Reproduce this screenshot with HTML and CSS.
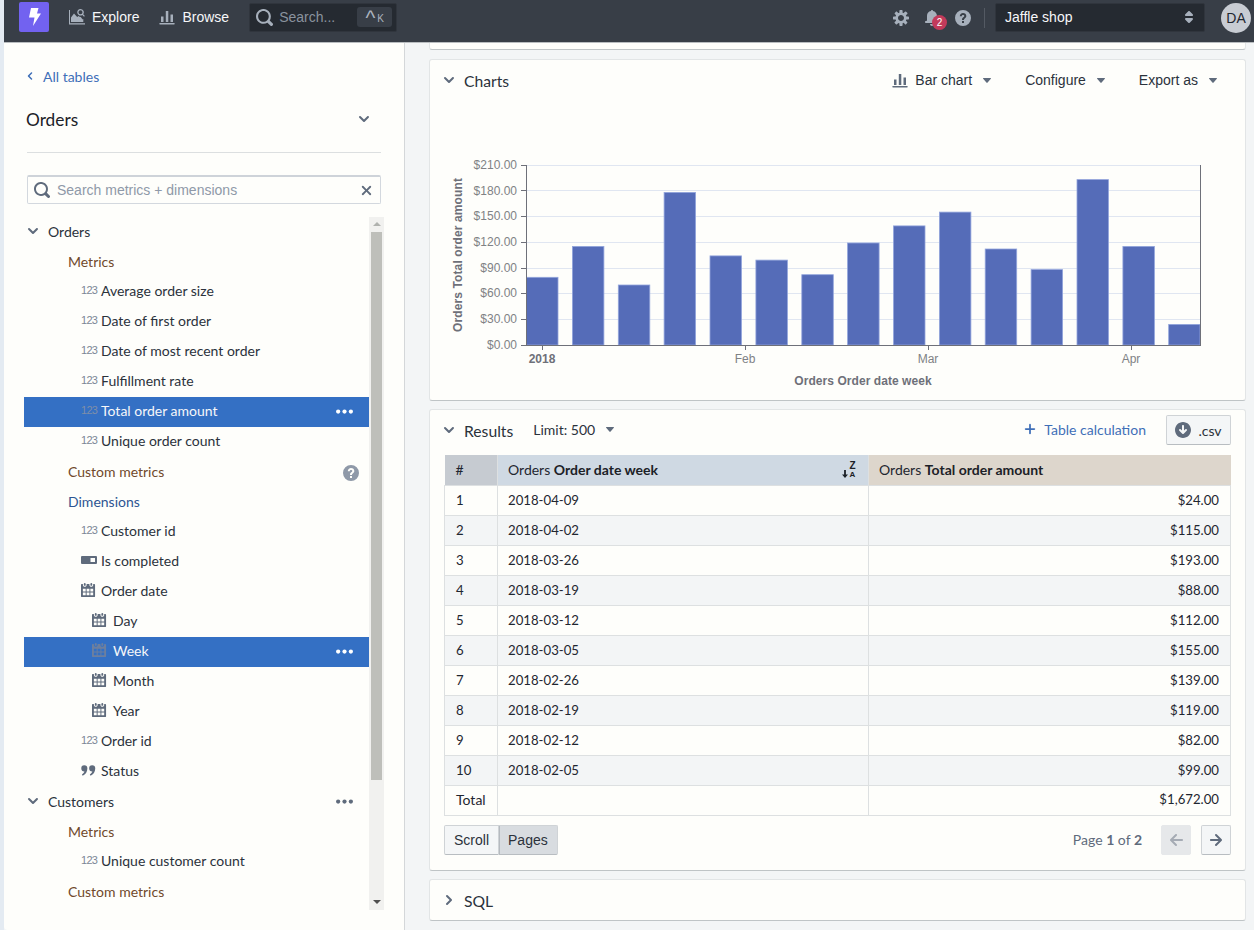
FILE: index.html
```html
<!DOCTYPE html>
<html lang="en">
<head>
<meta charset="utf-8">
<title>Explore</title>
<link rel="stylesheet" href="styles.css">
</head>
<body>
<svg class="sprite" xmlns="http://www.w3.org/2000/svg">
  <symbol id="i-chev-d" viewBox="0 0 16 16"><path d="M12 5c-.28 0-.53.11-.71.29L8 8.59l-3.29-3.3a1.003 1.003 0 00-1.42 1.42l4 4c.18.18.43.29.71.29s.53-.11.71-.29l4-4A1.003 1.003 0 0012 5z"/></symbol>
  <symbol id="i-chev-l" viewBox="0 0 16 16"><path d="M7.41 8l3.29-3.29c.19-.18.3-.43.3-.71a1.003 1.003 0 00-1.71-.71l-4 4C5.11 7.47 5 7.72 5 8c0 .28.11.53.29.71l4 4a1.003 1.003 0 001.42-1.42L7.41 8z"/></symbol>
  <symbol id="i-chev-r" viewBox="0 0 16 16"><path d="M10.71 7.29l-4-4a1.003 1.003 0 00-1.42 1.42L8.59 8 5.3 11.29c-.19.18-.3.43-.3.71a1.003 1.003 0 001.71.71l4-4c.18-.18.29-.43.29-.71 0-.28-.11-.53-.29-.71z"/></symbol>
  <symbol id="i-search" viewBox="0 0 16 16"><path d="M15.55 13.43l-2.67-2.68a6.94 6.94 0 001.11-3.76c0-3.87-3.13-7-7-7s-7 3.13-7 7 3.13 7 7 7c1.39 0 2.68-.42 3.76-1.11l2.68 2.67a1.498 1.498 0 102.12-2.12zm-8.56-1.44c-2.76 0-5-2.24-5-5s2.24-5 5-5 5 2.24 5 5-2.24 5-5 5z"/></symbol>
  <symbol id="i-cross" viewBox="0 0 16 16"><path d="M9.41 8l3.29-3.29c.19-.18.3-.43.3-.71a1.003 1.003 0 00-1.71-.71L8 6.59l-3.29-3.3a1.003 1.003 0 00-1.42 1.42L6.59 8 3.3 11.29c-.19.18-.3.43-.3.71a1.003 1.003 0 001.71.71L8 9.41l3.29 3.29c.18.19.43.3.71.3a1.003 1.003 0 00.71-1.71L9.41 8z"/></symbol>
  <symbol id="i-cog" viewBox="0 0 16 16"><path d="M15.19 6.39h-1.85c-.11-.37-.27-.71-.45-1.04l1.36-1.36c.31-.31.31-.82 0-1.13l-1.13-1.13a.803.803 0 00-1.13 0l-1.36 1.36c-.33-.17-.67-.33-1.04-.44V.79c0-.44-.36-.8-.8-.8h-1.6c-.44 0-.8.36-.8.8v1.86c-.39.12-.75.28-1.1.47l-1.3-1.3c-.3-.3-.79-.3-1.09 0L1.82 2.91c-.3.3-.3.79 0 1.09l1.3 1.3c-.2.34-.36.7-.48 1.09H.79c-.44 0-.8.36-.8.8v1.6c0 .44.36.8.8.8h1.85c.11.37.27.71.45 1.04l-1.36 1.36c-.31.31-.31.82 0 1.13l1.13 1.13c.31.31.82.31 1.13 0l1.36-1.36c.33.18.67.33 1.04.44v1.86c0 .44.36.8.8.8h1.6c.44 0 .8-.36.8-.8v-1.86c.39-.12.75-.28 1.1-.47l1.3 1.3c.3.3.79.3 1.09 0l1.09-1.09c.3-.3.3-.79 0-1.09l-1.3-1.3c.19-.35.36-.71.48-1.1h1.85c.44 0 .8-.36.8-.8v-1.6a.816.816 0 00-.81-.79zm-7.2 4.6c-1.66 0-3-1.34-3-3s1.34-3 3-3 3 1.34 3 3-1.34 3-3 3z"/></symbol>
  <symbol id="i-bell" viewBox="0 0 16 16"><path d="M8 16c1.1 0 2-.9 2-2H6c0 1.1.9 2 2 2zm6-5c-.55 0-1-.45-1-1V6c0-2.43-1.73-4.45-4.02-4.9 0-.04.02-.06.02-.1 0-.55-.45-1-1-1S7 .45 7 1c0 .04.02.06.02.1A4.992 4.992 0 003 6v4c0 .55-.45 1-1 1s-1 .45-1 1 .45 1 1 1h12c.55 0 1-.45 1-1s-.45-1-1-1z"/></symbol>
  <symbol id="i-help" viewBox="0 0 16 16"><path fill-rule="evenodd" d="M8 0a8 8 0 100 16A8 8 0 008 0zM7 11h2v2H7v-2zm1-8c1.9 0 3.3 1.2 3.3 2.9 0 1-.5 1.6-1.3 2.3-.7.6-1 .9-1 1.8H7c0-1.4.5-2 1.3-2.7.6-.5 1-.8 1-1.4C9.300 5.300 8.800 5 8 5c-.7 0-1.200.5-1.200 1.200h-2C4.800 4.300 6.200 3 8 3z"/></symbol>
  <symbol id="i-bars" viewBox="0 0 16 16"><path d="M1 14h14a.75.75 0 010 1.500H1A.75.75 0 011 14zM2 7.500h2.500V13H2zM6.800 2h2.500v11H6.800zM11.500 5.500H14V13h-2.500z"/></symbol>
  <symbol id="i-explore" viewBox="0 0 16 16"><path fill-rule="evenodd" d="M0 1h1v13.200h15V15.500H0zM2 8.500l3-4 3.200 3.400 1.300-.900c.5.600 1.300 1 2.200 1l2 2.500.6-.5V13H2zM11.500 0a3.300 3.300 0 012.700 5.200l1.700 1.700-.9.900-1.700-1.700A3.300 3.300 0 1111.500 0zm0 1.300a2 2 0 100 4 2 2 0 000-4z"/></symbol>
  <symbol id="i-cal" viewBox="0 0 16 16"><path d="M11 3c.6 0 1-.5 1-1V1c0-.6-.4-1-1-1s-1 .4-1 1v1c0 .5.4 1 1 1zm3-2h-1v1c0 1.100-.9 2-2 2s-2-.9-2-2V1H6v1c0 1.100-.9 2-2 2s-2-.9-2-2V1H1c-.6 0-1 .5-1 1v12c0 .6.400 1 1 1h13c.6 0 1-.4 1-1V2c0-.5-.5-1-1-1zM5 13H2v-3h3v3zm0-4H2V6h3v3zm4 4H6v-3h3v3zm0-4H6V6h3v3zm4 4h-3v-3h3v3zm0-4h-3V6h3v3zM4 3c.6 0 1-.5 1-1V1c0-.6-.4-1-1-1S3 .4 3 1v1c0 .5.4 1 1 1z"/></symbol>
  <symbol id="i-quote" viewBox="0 0 16 16"><path d="M3.500 2.500a3.300 3.300 0 013.300 3.300c0 3.500-2 6.500-5 7.700l-.8-1.300c1.400-.8 2.400-1.900 2.700-3.100A3.300 3.300 0 013.500 2.500zm8.400 0a3.300 3.300 0 013.300 3.300c0 3.500-2 6.500-5 7.700l-.8-1.300c1.400-.8 2.400-1.900 2.700-3.100a3.300 3.300 0 01-.2-6.600z"/></symbol>
  <symbol id="i-toggle" viewBox="0 0 16 8"><path fill-rule="evenodd" d="M1 0h14a1 1 0 011 1v6a1 1 0 01-1 1H1a1 1 0 01-1-1V1a1 1 0 011-1zm8.500 2v4H14V2z"/></symbol>
  <symbol id="i-more" viewBox="0 0 16 4"><circle cx="2" cy="2" r="2"/><circle cx="8" cy="2" r="2"/><circle cx="14" cy="2" r="2"/></symbol>
  <symbol id="i-caret" viewBox="0 0 16 16"><path d="M12 6.500c0-.28-.22-.5-.5-.5h-7a.495.495 0 00-.37.83l3.500 4c.09.1.22.17.37.17s.28-.07.37-.17l3.500-4c.08-.09.13-.2.13-.33z"/></symbol>
  <symbol id="i-updown" viewBox="0 0 16 16"><path d="M5 7h6a1.003 1.003 0 00.71-1.710l-3-3C8.530 2.110 8.280 2 8 2s-.53.110-.71.290l-3 3A1.003 1.003 0 005 7zm6 2H5a1.003 1.003 0 00-.71 1.710l3 3c.18.18.43.290.71.290s.53-.11.71-.29l3-3A1.003 1.003 0 0011 9z"/></symbol>
  <symbol id="i-plus" viewBox="0 0 16 16"><path d="M13 7H9V3c0-.55-.45-1-1-1s-1 .45-1 1v4H3c-.55 0-1 .45-1 1s.45 1 1 1h4v4c0 .55.45 1 1 1s1-.45 1-1V9h4c.55 0 1-.45 1-1s-.45-1-1-1z"/></symbol>
  <symbol id="i-dl" viewBox="0 0 16 16"><path d="M8 0C3.580 0 0 3.580 0 8s3.580 8 8 8 8-3.580 8-8-3.580-8-8-8zm3.710 8.710l-3 3c-.18.18-.43.29-.71.29s-.53-.11-.71-.29l-3-3a1.003 1.003 0 011.420-1.420L7 8.590V4c0-.55.45-1 1-1s1 .45 1 1v4.590l1.290-1.290a1.003 1.003 0 011.420 1.420z"/></symbol>
  <symbol id="i-arrow-r" viewBox="0 0 16 16"><path d="M13.700 7.290l-5-5a.965.965 0 00-.71-.3 1.003 1.003 0 00-.71 1.710l3.300 3.290H2.990c-.55 0-1 .45-1 1s.45 1 1 1h7.590l-3.290 3.290c-.19.18-.3.43-.3.71a1.003 1.003 0 001.710.71l5-5c.18-.18.29-.43.29-.71s-.12-.52-.3-.7z"/></symbol>
  <symbol id="i-arrow-l" viewBox="0 0 16 16"><path d="M13.990 6.990H5.410l3.290-3.290c.19-.18.3-.43.3-.71a1.003 1.003 0 00-1.710-.71l-5 5c-.18.18-.29.43-.29.71s.11.53.29.71l5 5a1.003 1.003 0 001.420-1.420L5.410 8.990h8.580c.55 0 1-.45 1-1s-.45-1-1-1z"/></symbol>
  <symbol id="i-sort-arrow" viewBox="0 0 6 8"><path d="M2.100 0h1.800v4.500H6L3 8 0 4.500h2.100z"/></symbol>
</svg>

<header class="navbar">
  <div class="nav-logo">
    <svg class="bolt" viewBox="0 0 16 20"><path d="M5 1h7.500L11 6.500h4L7 19l1.500-8.500H3z"/></svg>
  </div>
  <a class="nav-link nav-explore"><svg class="ic16"><use href="#i-explore"/></svg>Explore</a>
  <a class="nav-link nav-browse"><svg class="ic16"><use href="#i-bars"/></svg>Browse</a>
  <div class="nav-search">
    <svg class="ic16"><use href="#i-search"/></svg>
    <span class="nav-search-text">Search...</span>
    <span class="kbd"><span class="kbd-ctrl">^</span><span class="kbd-k">K</span></span>
  </div>
  <div class="nav-right">
    <svg class="ic16 nav-ic"><use href="#i-cog"/></svg>
    <span class="bell"><svg class="ic16 nav-ic"><use href="#i-bell"/></svg><span class="badge">2</span></span>
    <svg class="ic16 nav-ic"><use href="#i-help"/></svg>
    <span class="nav-divider"></span>
    <div class="project"><span>Jaffle shop</span><svg class="ic16"><use href="#i-updown"/></svg></div>
    <span class="avatar">DA</span>
  </div>
</header>

<div class="page">
  <aside class="sidebar">
    <a class="back"><svg class="ic12"><use href="#i-chev-l"/></svg>All tables</a>
    <div class="table-title"><span>Orders</span><svg class="ic16"><use href="#i-chev-d"/></svg></div>
    <hr class="rule">
    <div class="filter">
      <svg class="ic16"><use href="#i-search"/></svg>
      <span class="filter-text">Search metrics + dimensions</span>
      <svg class="ic16 filter-x"><use href="#i-cross"/></svg>
    </div>
    <div class="tree-wrap">
      <ul class="tree">
        <li class="row row-table"><svg class="ic16"><use href="#i-chev-d"/></svg>Orders</li>
        <li class="row row-group metric">Metrics</li>
        <li class="row row-item"><span class="num">123</span>Average order size</li>
        <li class="row row-item"><span class="num">123</span>Date of first order</li>
        <li class="row row-item"><span class="num">123</span>Date of most recent order</li>
        <li class="row row-item"><span class="num">123</span>Fulfillment rate</li>
        <li class="row row-item selected"><span class="num">123</span>Total order amount<svg class="more"><use href="#i-more"/></svg></li>
        <li class="row row-item"><span class="num">123</span>Unique order count</li>
        <li class="row row-group metric">Custom metrics<svg class="ic16 row-help"><use href="#i-help"/></svg></li>
        <li class="row row-group dimension">Dimensions</li>
        <li class="row row-item"><span class="num">123</span>Customer id</li>
        <li class="row row-item"><svg class="toggle"><use href="#i-toggle"/></svg>Is completed</li>
        <li class="row row-item"><svg class="type-ic"><use href="#i-cal"/></svg>Order date</li>
        <li class="row row-sub"><svg class="type-ic"><use href="#i-cal"/></svg>Day</li>
        <li class="row row-sub selected"><svg class="type-ic"><use href="#i-cal"/></svg>Week<svg class="more"><use href="#i-more"/></svg></li>
        <li class="row row-sub"><svg class="type-ic"><use href="#i-cal"/></svg>Month</li>
        <li class="row row-sub"><svg class="type-ic"><use href="#i-cal"/></svg>Year</li>
        <li class="row row-item"><span class="num">123</span>Order id</li>
        <li class="row row-item"><svg class="type-ic"><use href="#i-quote"/></svg>Status</li>
        <li class="row row-table"><svg class="ic16"><use href="#i-chev-d"/></svg>Customers<svg class="more"><use href="#i-more"/></svg></li>
        <li class="row row-group metric">Metrics</li>
        <li class="row row-item"><span class="num">123</span>Unique customer count</li>
        <li class="row row-group metric">Custom metrics</li>
      </ul>
      <div class="scrollbar">
        <span class="sb-arrow sb-up"></span>
        <span class="sb-thumb"></span>
        <span class="sb-arrow sb-down"></span>
      </div>
    </div>
  </aside>

  <main class="main">
    <div class="card card-stub"></div>

    <section class="card card-charts">
      <div class="card-head">
        <svg class="ic16"><use href="#i-chev-d"/></svg>
        <span class="card-title">Charts</span>
        <div class="tools">
          <a class="tool"><svg class="ic16"><use href="#i-bars"/></svg>Bar chart<svg class="ic16"><use href="#i-caret"/></svg></a>
          <a class="tool">Configure<svg class="ic16"><use href="#i-caret"/></svg></a>
          <a class="tool">Export as<svg class="ic16"><use href="#i-caret"/></svg></a>
        </div>
      </div>
      <svg class="chart" viewBox="430 101 815 299" xmlns="http://www.w3.org/2000/svg">
        <g class="grid">
          <line x1="526" x2="1200" y1="165.500" y2="165.500"/>
          <line x1="526" x2="1200" y1="190.500" y2="190.500"/>
          <line x1="526" x2="1200" y1="216.500" y2="216.500"/>
          <line x1="526" x2="1200" y1="242.500" y2="242.500"/>
          <line x1="526" x2="1200" y1="268.500" y2="268.500"/>
          <line x1="526" x2="1200" y1="293.500" y2="293.500"/>
          <line x1="526" x2="1200" y1="319.500" y2="319.500"/>
        </g>
        <g class="bars">
          <rect x="526.500" y="277.300" width="31.500" height="67.700"/>
          <rect x="572.400" y="246.400" width="31.500" height="98.600"/>
          <rect x="618.300" y="285" width="31.500" height="60"/>
          <rect x="664.100" y="192.400" width="31.500" height="152.600"/>
          <rect x="710" y="255.900" width="31.500" height="89.100"/>
          <rect x="755.900" y="260.100" width="31.500" height="84.900"/>
          <rect x="801.800" y="274.700" width="31.500" height="70.300"/>
          <rect x="847.600" y="243" width="31.500" height="102"/>
          <rect x="893.500" y="225.900" width="31.500" height="119.100"/>
          <rect x="939.400" y="212.100" width="31.500" height="132.900"/>
          <rect x="985.200" y="249" width="31.500" height="96"/>
          <rect x="1031.100" y="269.600" width="31.500" height="75.400"/>
          <rect x="1077" y="179.600" width="31.500" height="165.400"/>
          <rect x="1122.900" y="246.400" width="31.500" height="98.600"/>
          <rect x="1168.700" y="324.400" width="31.300" height="20.600"/>
        </g>
        <g class="axis">
          <path d="M526.500 165v180.500M1200.500 165v180.500M526 345.500h675M521 165.500h5M521 190.500h5M521 216.500h5M521 242.500h5M521 268.500h5M521 293.500h5M521 319.500h5M521 345.500h5M542.500 345v5M745.500 345v5M928.500 345v5M1131.500 345v5"/>
        </g>
        <g class="y-labels">
          <text x="517" y="169">$210.00</text>
          <text x="517" y="195">$180.00</text>
          <text x="517" y="220">$150.00</text>
          <text x="517" y="246">$120.00</text>
          <text x="517" y="272">$90.00</text>
          <text x="517" y="297">$60.00</text>
          <text x="517" y="323">$30.00</text>
          <text x="517" y="349">$0.00</text>
        </g>
        <g class="x-labels">
          <text class="x-year" x="542" y="363">2018</text>
          <text x="745" y="363">Feb</text>
          <text x="928" y="363">Mar</text>
          <text x="1131" y="363">Apr</text>
        </g>
        <text class="axis-name" x="863" y="385">Orders Order date week</text>
        <text class="axis-name axis-name-y" transform="translate(462 255) rotate(-90)">Orders Total order amount</text>
      </svg>
    </section>

    <section class="card card-results">
      <div class="card-head results-head">
        <svg class="ic16"><use href="#i-chev-d"/></svg>
        <span class="card-title">Results</span>
        <a class="limit">Limit: 500<svg class="ic16"><use href="#i-caret"/></svg></a>
        <div class="tools">
          <a class="add-calc"><svg class="ic14"><use href="#i-plus"/></svg>Table calculation</a>
          <a class="btn btn-csv"><svg class="ic16"><use href="#i-dl"/></svg>.csv</a>
        </div>
      </div>
      <table class="grid-table">
        <colgroup><col class="col-idx"><col class="col-date"><col class="col-amt"></colgroup>
        <thead>
          <tr>
            <th class="th-idx">#</th>
            <th class="th-dim"><span class="th-in"><span>Orders <b>Order date week</b></span><span class="sort"><svg class="sort-arrow"><use href="#i-sort-arrow"/></svg><span class="sort-az"><span>Z</span><span>A</span></span></span></span></th>
            <th class="th-metric">Orders <b>Total order amount</b></th>
          </tr>
        </thead>
        <tbody>
          <tr><td>1</td><td>2018-04-09</td><td class="amt">$24.00</td></tr>
          <tr><td>2</td><td>2018-04-02</td><td class="amt">$115.00</td></tr>
          <tr><td>3</td><td>2018-03-26</td><td class="amt">$193.00</td></tr>
          <tr><td>4</td><td>2018-03-19</td><td class="amt">$88.00</td></tr>
          <tr><td>5</td><td>2018-03-12</td><td class="amt">$112.00</td></tr>
          <tr><td>6</td><td>2018-03-05</td><td class="amt">$155.00</td></tr>
          <tr><td>7</td><td>2018-02-26</td><td class="amt">$139.00</td></tr>
          <tr><td>8</td><td>2018-02-19</td><td class="amt">$119.00</td></tr>
          <tr><td>9</td><td>2018-02-12</td><td class="amt">$82.00</td></tr>
          <tr><td>10</td><td>2018-02-05</td><td class="amt">$99.00</td></tr>
        </tbody>
        <tfoot>
          <tr><td>Total</td><td></td><td class="amt">$1,672.00</td></tr>
        </tfoot>
      </table>
      <div class="pager-row">
        <div class="btn-group"><a class="btn seg">Scroll</a><a class="btn seg seg-active">Pages</a></div>
        <div class="pager">
          <span class="page-text">Page <b>1</b> of <b>2</b></span>
          <a class="page-btn page-off"><svg class="ic16"><use href="#i-arrow-l"/></svg></a>
          <a class="page-btn"><svg class="ic16"><use href="#i-arrow-r"/></svg></a>
        </div>
      </div>
    </section>

    <section class="card card-sql">
      <div class="card-head">
        <svg class="ic16"><use href="#i-chev-r"/></svg>
        <span class="card-title">SQL</span>
      </div>
    </section>
  </main>
</div>
</body>
</html>
```

FILE: styles.css
```css
* { box-sizing: border-box; }
html, body { margin: 0; height: 100%; }
body {
  width: 1254px;
  height: 930px;
  overflow: hidden;
  background: #e4ebf2;
  padding-left: 4px;
  font-family: "Lato", sans-serif;
  font-size: 14px;
  color: #1f2630;
}
a { color: inherit; text-decoration: none; }
ul { list-style: none; margin: 0; padding: 0; }
.sprite { display: none; }
svg { fill: currentColor; flex: none; }
.ic12 { width: 12px; height: 12px; }
.ic14 { width: 14px; height: 14px; }
.ic16 { width: 16px; height: 16px; }

/* navbar */
.navbar {
  height: 43px;
  background: #383e47;
  display: flex;
  align-items: flex-start;
  color: #f6f7f9;
  font-family: "Liberation Sans", sans-serif;
  font-size: 14px;
  padding-left: 15px;
  border-bottom: 1px solid #b9bdc0;
}
.nav-logo {
  width: 30px;
  height: 30px;
  margin-top: 2px;
  background: #7262f0;
  border-radius: 2px;
  display: flex;
  align-items: center;
  justify-content: center;
  color: #fff;
}
.bolt { width: 16px; height: 20px; }
.nav-link {
  height: 34px;
  display: flex;
  align-items: center;
  gap: 7px;
}
.nav-link svg { color: #a7b0bc; }
.nav-explore { margin-left: 20px; }
.nav-browse { margin-left: 20px; }
.nav-search {
  margin-left: 20px;
  margin-top: 3px;
  width: 148px;
  height: 29px;
  background: #252a31;
  border: 1px solid #30353d;
  border-radius: 2px;
  display: flex;
  align-items: center;
  color: #a7b0bc;
  padding-left: 6px;
}
.nav-search .ic16 { width: 17px; height: 17px; }
.nav-search-text { margin-left: 6px; margin-bottom: 2px; color: #8a929e; }
.kbd {
  margin-left: auto;
  margin-right: 4px;
  margin-bottom: 2px;
  width: 35px;
  height: 20px;
  background: #383e47;
  border-radius: 3px;
  display: flex;
  justify-content: center;
  align-items: center;
  color: #abb3bf;
  gap: 2px;
}
.kbd-ctrl { font-size: 21px; line-height: 20px; height: 20px; margin-top: 2px; }
.kbd-k { font-size: 10px; margin-top: 3px; }
.nav-right {
  margin-left: auto;
  display: flex;
  align-items: center;
  height: 35px;
  padding-right: 2px;
}
.nav-ic { color: #a7b0bc; }
.nav-right > .nav-ic:first-child { margin-right: 15px; }
.bell { position: relative; display: flex; margin-right: 15px; }
.badge {
  position: absolute;
  left: 8px;
  top: 5px;
  width: 15px;
  height: 15px;
  border-radius: 50%;
  background: #c23a5b;
  color: #fff;
  font-size: 10px;
  line-height: 15px;
  text-align: center;
}
.nav-divider { width: 1px; height: 20px; background: #545a63; margin: 0 10px 0 13px; }
.project {
  width: 210px;
  height: 29px;
  background: #252a31;
  border: 1px solid #30353d;
  border-radius: 2px;
  display: flex;
  align-items: center;
  justify-content: space-between;
  padding: 0 7px 1px 9px;
}
.project svg { color: #a7b0bc; }
.avatar {
  margin-left: 16px;
  width: 30px;
  height: 30px;
  border-radius: 50%;
  background: #c8ccd3;
  color: #1f2630;
  display: flex;
  align-items: center;
  justify-content: center;
  margin-right: 1px;
}

/* layout */
.page { display: flex; height: 887px; background: #f3f5f6; }

/* sidebar */
.sidebar {
  width: 401px;
  background: #fefefb;
  border-right: 1px solid #d4d7d9;
  border-bottom-left-radius: 4px;
  padding: 0 0 0 20px;
}
.back {
  display: flex;
  align-items: center;
  height: 20px;
  margin-top: 24px;
  padding-bottom: 2px;
  color: #3f6fb8;
  gap: 7px;
}
.table-title {
  display: flex;
  align-items: center;
  justify-content: space-between;
  margin: 19px 32px 0 2px;
  height: 27px;
  font-size: 17.300px;
  color: #1c2127;
}
.table-title svg { color: #5f6b7c; margin-bottom: 2px; }
.rule {
  margin: 19px 23px 0 3px;
  border: 0;
  border-top: 1px solid #dcdfe0;
  height: 1px;
}
.filter {
  margin: 22px 23px 0 3px;
  height: 29px;
  border: 1px solid #d3d8de;
  border-top: 2px solid #ced3d9;
  border-radius: 2px;
  display: flex;
  align-items: center;
  padding: 0 6px;
  color: #5f6b7c;
  font-family: "Liberation Sans", sans-serif;
  font-size: 14px;
}
.filter-text { margin-left: 7px; color: #8f99a8; }
.filter-x { margin-left: auto; width: 15px; height: 15px; }
.tree-wrap { display: flex; margin-top: 13px; height: 693px; }
.tree { width: 345px; overflow: hidden; }
.row {
  height: 30px;
  display: flex;
  align-items: center;
  white-space: nowrap;
  position: relative;
  color: #2b323b;
  padding-bottom: 2px;
}
.row-table { padding-left: 1px; color: #2b323b; }
.row-table > .ic16 { color: #5f6b7c; margin-right: 7px; }
.row-group { padding-left: 44px; }
.metric { color: #70492b; }
.dimension { color: #2d5592; }
.row-item { padding: 0 0 4px 57px; }
.row-sub { padding: 0 0 4px 68px; }
.num {
  width: 20px;
  flex: none;
  font-family: "Liberation Sans", sans-serif;
  font-size: 11px;
  color: #7c8796;
  letter-spacing: -.7px;
}
.type-ic { width: 15px; height: 15px; margin-right: 5px; color: #5f6b7c; }
.row-sub .type-ic { margin-right: 6px; }
.toggle { width: 16px; height: 8px; margin-right: 4px; color: #5f6b7c; }
.more {
  position: absolute;
  right: 16px;
  top: 12px;
  width: 17px;
  height: 5px;
  color: #5f6b7c;
}
.row-help { position: absolute; right: 10px; top: 8px; color: #8f99a8; }
.selected { background: #3470c4; color: #f6f7f9; }
.selected .more { color: #fff; }
.selected .num { color: #7f8ea8; }
.selected .type-ic { color: #6d7f9e; }
.scrollbar {
  width: 15px;
  background: #f1f1ef;
  display: flex;
  flex-direction: column;
  align-items: center;
}
.sb-arrow {
  width: 0;
  height: 0;
  flex: none;
  border-left: 4px solid transparent;
  border-right: 4px solid transparent;
  margin: 5px 0 6px;
}
.sb-up { border-bottom: 4px solid #b0b2ae; }
.sb-down { border-top: 4px solid #505050; margin-top: auto; }
.sb-thumb { width: 11px; height: 548px; background: #bebfba; }

/* main */
.main { flex: 1; padding: 0 8px 0 24px; min-width: 0; }
.card {
  background: #fefefb;
  border: 1px solid #e2e5e6;
  border-bottom-color: #bfc4c6;
  border-radius: 3px;
}
.card-stub { height: 7px; border-top: 0; border-radius: 0 0 3px 3px; }
.card-charts { margin-top: 9px; height: 342px; }
.card-results { margin-top: 8px; height: 462px; }
.card-sql { margin-top: 8px; height: 42px; }
.card-head {
  height: 41px;
  display: flex;
  align-items: center;
  padding: 0 14px 0 11px;
  font-size: 14px;
}
.card-head > .ic16 { color: #5f6b7c; margin-bottom: 2px; }
.card-title { margin-left: 7px; font-size: 15.700px; color: #2b323b; }
.tools { margin-left: auto; display: flex; align-items: center; margin-bottom: 2px; }
.card-charts .tools { margin-right: 10px; }
.tool {
  display: flex;
  align-items: center;
  font-family: "Liberation Sans", sans-serif;
  font-size: 14px;
  color: #2b323b;
  margin-left: 30px;
  gap: 7px;
}
.tool svg { color: #5f6b7c; }
.chart { display: block; width: 815px; height: 299px; }
.grid line { stroke: #e0e6f1; stroke-width: 1; }
.bars rect { fill: #556cb8; stroke: #93a5dc; stroke-width: .8; }
.axis path { fill: none; stroke: #6e7079; stroke-width: 1; }
.chart text { font-family: "Liberation Sans", sans-serif; font-size: 12px; fill: #808285; }
.y-labels text { text-anchor: end; }
.x-labels text { text-anchor: middle; }
.chart .x-year { font-weight: bold; fill: #6e7079; }
.chart .axis-name { font-weight: bold; fill: #6e7079; text-anchor: middle; letter-spacing: .06px; }
.chart .axis-name-y { letter-spacing: .12px; }

/* results */
.results-head { height: 45px; padding-bottom: 3px; padding-right: 14px; }
.limit {
  display: flex;
  align-items: center;
  margin-left: 20px;
  margin-bottom: 4px;
  font-size: 14px;
  gap: 7px;
  color: #2b323b;
}
.limit svg { color: #5f6b7c; }
.add-calc {
  display: flex;
  align-items: center;
  color: #3f6fb8;
  font-size: 14px;
  gap: 7px;
  margin-bottom: 2px;
}
.btn {
  display: flex;
  align-items: center;
  justify-content: center;
  background: #f4f6f7;
  border: 1px solid #cfd3d6;
  border-bottom-color: #b8bdc1;
  border-radius: 2px;
  color: #2b323b;
}
.btn-csv { margin-left: 20px; width: 65px; height: 30px; gap: 7px; }
.btn-csv svg { color: #5f6b7c; }
.grid-table {
  margin-left: 14px;
  width: 787px;
  border-collapse: collapse;
  table-layout: fixed;
}
.col-idx { width: 53px; }
.col-date { width: 371px; }
.grid-table th, .grid-table td {
  height: 30px;
  padding: 0 11px 0 10px;
  text-align: left;
  font-weight: 400;
  border: 1px solid #dde0e1;
  white-space: nowrap;
}
.grid-table th:first-child, .grid-table td:first-child { padding-left: 11px; }
.grid-table tbody td, .grid-table tfoot .amt { font-size: 13.200px; }
.grid-table tfoot td { padding-bottom: 2px; }
.grid-table thead th { border: 0; border-right: 1px solid #dde0e1; height: 30px; }
.grid-table th b { font-weight: 700; color: #1c2127; }
.grid-table th:last-child { border-right: 0; }
.th-idx { background: #c6cbd1; }
.th-dim { background: #cfd9e3; }
.th-metric { background: #ddd6cc; }
.th-in { display: flex; align-items: center; justify-content: space-between; }
.sort { display: flex; align-items: flex-end; color: #1c2127; margin-right: 1px; gap: 1px; height: 18px; }
.sort-arrow { width: 6px; height: 8px; margin-bottom: 1px; }
.sort-az { display: flex; flex-direction: column; align-items: center; font-family: "Liberation Sans", sans-serif; font-weight: 700; width: 7px; }
.sort-az span:first-child { font-size: 10px; line-height: 10px; }
.sort-az span:last-child { font-size: 8px; line-height: 8px; }
.grid-table tbody tr:nth-child(even) td { background: #f3f5f6; }
.grid-table .amt { text-align: right; }
.pager-row {
  margin: 9px 14px 0 14px;
  display: flex;
  justify-content: space-between;
  align-items: center;
}
.btn-group { display: flex; }
.seg {
  height: 30px;
  padding: 0 9px;
  font-family: "Liberation Sans", sans-serif;
  font-size: 14px;
  border-radius: 2px 0 0 2px;
}
.seg-active {
  background: #d8dce0;
  border-left: 0;
  border-radius: 0 2px 2px 0;
  box-shadow: inset 1px 0 0 #b5babf;
}
.pager { display: flex; align-items: center; }
.page-text { color: #5f6b7c; margin-right: 19px; }
.page-text b { font-weight: 700; }
.page-btn {
  width: 30px;
  height: 30px;
  display: flex;
  align-items: center;
  justify-content: center;
  background: #f4f6f7;
  border: 1px solid #cfd3d6;
  border-bottom-color: #b8bdc1;
  border-radius: 2px;
  color: #5f6b7c;
  margin-left: 10px;
}
.page-btn.page-off { background: #e6e8ea; border-color: #e6e8ea; color: #a5abb4; margin-left: 0; }
.card-sql .card-head { height: 42px; }
```
